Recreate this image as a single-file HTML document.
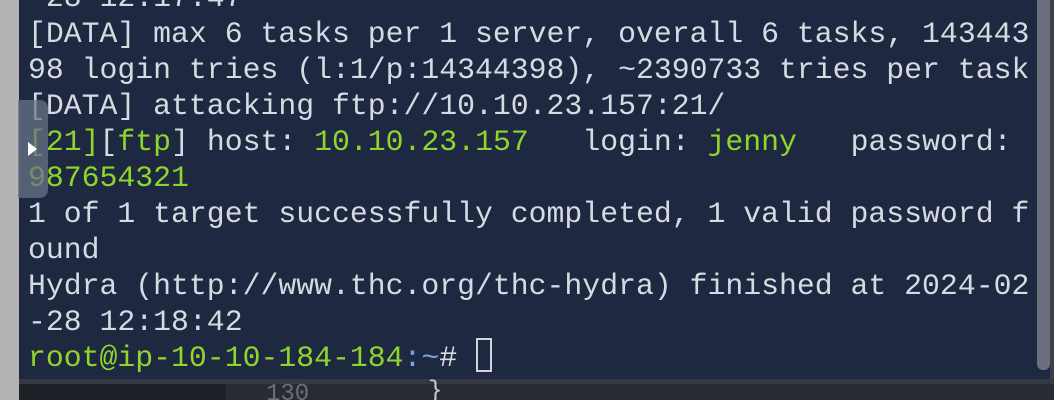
<!DOCTYPE html>
<html><head><meta charset="utf-8"><style>
html,body{margin:0;padding:0;width:1054px;height:400px;overflow:hidden;background:#b4b4b4;position:relative}
#term{position:absolute;left:19px;top:0;width:1035px;height:379px;background:#1e2840;overflow:hidden}
#txt{position:absolute;left:9px;top:-20px;font-family:"Liberation Mono",monospace;font-size:29.8px;line-height:36px;color:#d6dbe2;white-space:pre;letter-spacing:0}
.g{color:#8ed62e}
.b{color:#7aa0d8}
#sb{position:absolute;left:1037px;top:0;width:13px;height:370px;background:#6a6f7c;border-radius:0 0 6px 6px}
#rt{position:absolute;left:1050px;top:0;width:4px;height:379px;background:#3a3f4a}
#strip{position:absolute;left:19px;top:379px;width:1035px;height:5px;background:#353943}
#ed1{position:absolute;left:19px;top:384px;width:207px;height:16px;background:#1e2128}
#ed2{position:absolute;left:226px;top:384px;width:828px;height:16px;background:#282b32}
#ln{position:absolute;left:266px;top:381px;font-family:"Liberation Mono",monospace;font-size:24px;color:#6a6e78}
#br{position:absolute;left:428px;top:378px;font-family:"Liberation Mono",monospace;font-size:24px;color:#c8ccd2}
#wid{position:absolute;left:18px;top:100px;width:30px;height:98px;background:rgba(105,115,135,.75);border-radius:0 8px 8px 0}
#cur{position:absolute;top:338px;width:16px;height:34px;border:2px solid #d0d4da;box-sizing:border-box}
</style></head><body>
<div id="term">
<div id="txt">-28 12:17:47
[DATA] max 6 tasks per 1 server, overall 6 tasks, 143443
98 login tries (l:1/p:14344398), ~2390733 tries per task
[DATA] attacking ftp://10.10.23.157:21/
<span class="g">[21]</span>[<span class="g">ftp</span>] host: <span class="g">10.10.23.157</span>   login: <span class="g">jenny</span>   password: 
<span class="g">987654321</span>
1 of 1 target successfully completed, 1 valid password f
ound
Hydra (http://www.thc.org/thc-hydra) finished at 2024-02
-28 12:18:42
<span class="g">root@ip-10-10-184-184</span><span class="b">:~</span># </div>
<div id="cur" style="left:457px"></div>
</div>
<div id="sb"></div>
<div id="rt"></div>
<div id="strip"></div>
<div id="ed1"></div><div id="ed2"></div>
<div id="ln">130</div><div id="br">}</div>
<div id="wid"><svg width="30" height="98" style="position:absolute;left:0;top:0"><polygon points="10,42 10,56 19,49" fill="#fff"/></svg></div>
</body></html>
